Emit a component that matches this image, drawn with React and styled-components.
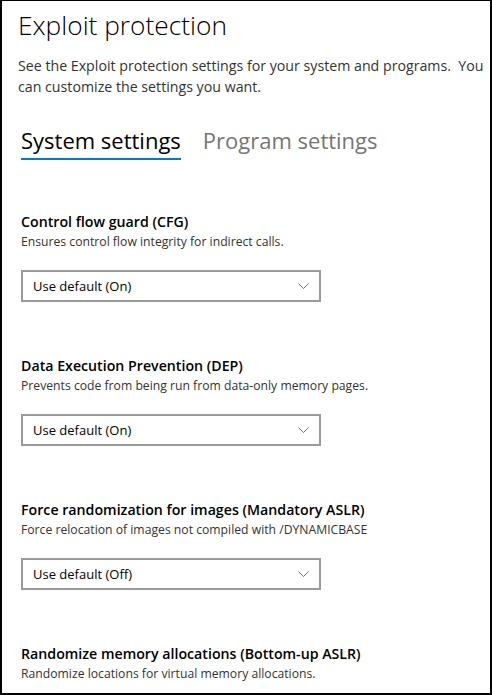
import React from 'react';
import styled, { createGlobalStyle } from 'styled-components';

const GlobalStyle = createGlobalStyle`
    html, body {
        margin: 0;
        padding: 0;
        background: #fff;
    }
    body {
        font-family: "Open Sans", "Noto Sans", "Liberation Sans", sans-serif;
        color: #000;
    }
`;

// last entry's dropdown sits below the visible area, so it has no value here
const settings = [
    {
        id: 'cfg',
        title: 'Control flow guard (CFG)',
        description: 'Ensures control flow integrity for indirect calls.',
        value: 'Use default (On)',
    },
    {
        id: 'dep',
        title: 'Data Execution Prevention (DEP)',
        description: 'Prevents code from being run from data-only memory pages.',
        value: 'Use default (On)',
    },
    {
        id: 'aslr',
        title: 'Force randomization for images (Mandatory ASLR)',
        description: 'Force relocation of images not compiled with /DYNAMICBASE',
        value: 'Use default (Off)',
    },
    {
        id: 'bottomup',
        title: 'Randomize memory allocations (Bottom-up ASLR)',
        description: 'Randomize locations for virtual memory allocations.',
    },
];

const Chevron = () => (
    <svg width="11" height="6" viewBox="0 0 11 6" fill="none">
        <path d="M0.5 0.5 L5.5 5.5 L10.5 0.5" stroke="#6e6e6e" strokeWidth="1" />
    </svg>
);

const App = () => (
    <>
        <GlobalStyle />
        <Frame>
            <Heading>Exploit protection</Heading>
            <Intro>
                See the Exploit protection settings for your system and programs.&nbsp; You can customize the settings you want.
            </Intro>
            <Tabs>
                <Tab active>System settings</Tab>
                <Tab>Program settings</Tab>
            </Tabs>
            <SettingList>
                {settings.map(item => (
                    <Setting key={item.id}>
                        <SettingTitle>{item.title}</SettingTitle>
                        <SettingDesc>{item.description}</SettingDesc>
                        {item.value && (
                            <Select>
                                <span>{item.value}</span>
                                <Chevron />
                            </Select>
                        )}
                    </Setting>
                ))}
            </SettingList>
        </Frame>
    </>
);

const Frame = styled.div`
    box-sizing: border-box;
    width: 492px;
    height: 695px;
    border-style: solid;
    border-color: #000;
    border-width: 1px 2px 2px 2px;
    padding: 0 6px 0 16px;
    overflow: hidden;
    background: #fff;
`;

const Heading = styled.h1`
    margin: 5px 0 0;
    font-size: 26.3px;
    font-weight: 300;
    line-height: 38px;
    color: #000;
`;

const Intro = styled.p`
    margin: 11px 0 0;
    font-size: 14.2px;
    line-height: 21px;
    color: #333;
`;

const Tabs = styled.div`
    display: flex;
    gap: 22px;
    margin-top: 27px;
    padding-left: 3px;
`;

const Tab = styled.div`
    font-size: 22px;
    font-weight: 400;
    line-height: 32px;
    padding-bottom: 2px;
    color: ${p => (p.active ? '#000' : '#767676')};
    border-bottom: 2px solid ${p => (p.active ? '#0078d7' : 'transparent')};
`;

const SettingList = styled.div`
    display: flex;
    flex-direction: column;
    gap: 54px;
    margin-top: 52px;
    padding-left: 3px;
`;

const Setting = styled.section`
    display: flex;
    flex-direction: column;
`;

const SettingTitle = styled.h3`
    margin: 0;
    font-size: 14.2px;
    font-weight: 600;
    line-height: 20px;
    color: #000;
`;

const SettingDesc = styled.p`
    margin: 0;
    font-size: 12.2px;
    line-height: 20px;
    color: #333;
`;

const Select = styled.div`
    box-sizing: border-box;
    display: flex;
    align-items: center;
    justify-content: space-between;
    width: 300px;
    height: 32px;
    margin-top: 18px;
    padding: 0 10px 0 10px;
    border: 2px solid #999;
    font-size: 13px;
    color: #000;
`;

export default App;
